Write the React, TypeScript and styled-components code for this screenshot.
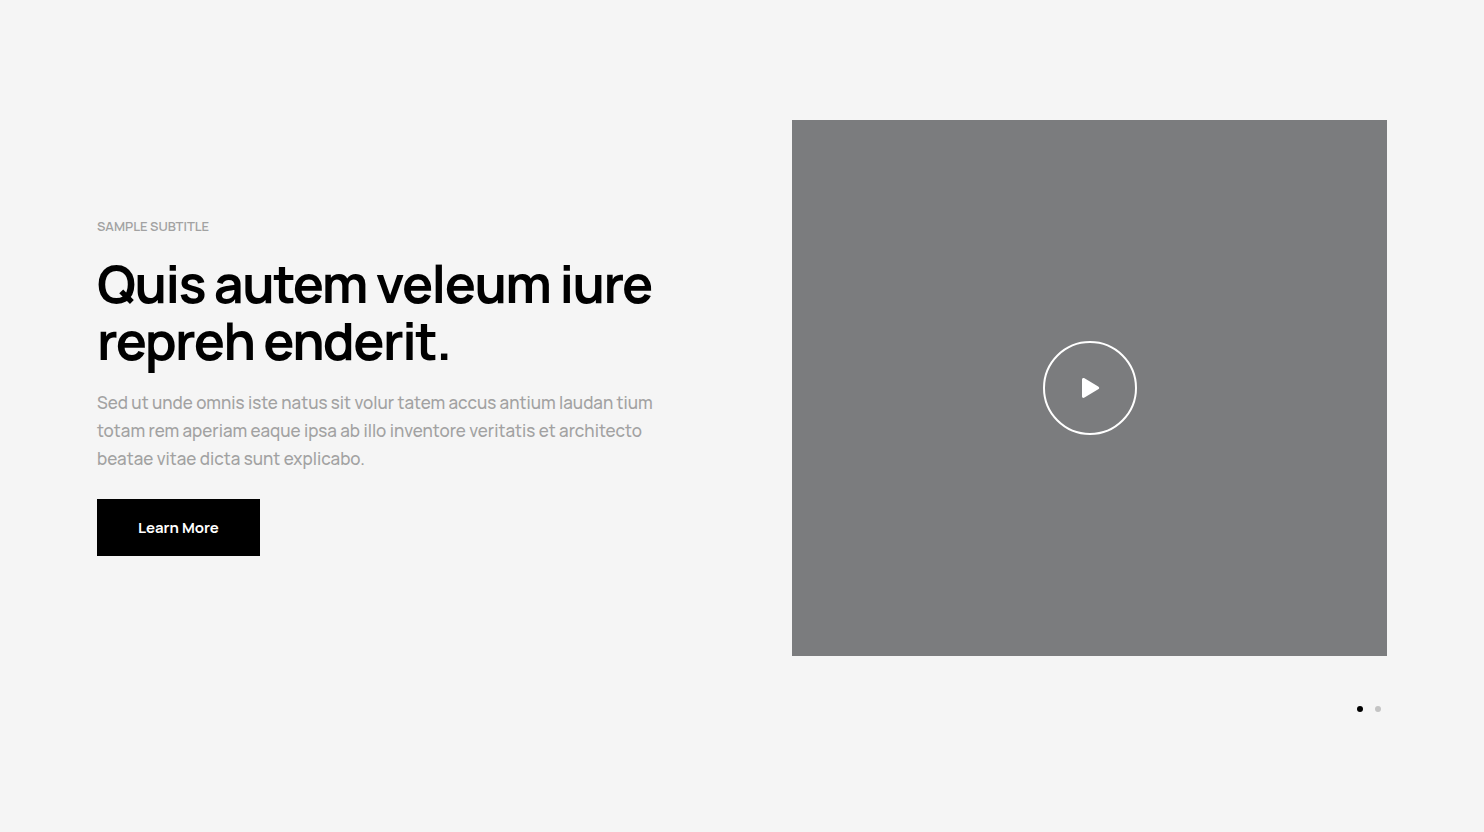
import React, { useState } from "react";
import styled, { createGlobalStyle } from "styled-components";

const GlobalStyle = createGlobalStyle`
  *, *::before, *::after { box-sizing: border-box; }
  body {
    margin: 0;
    background: #f5f5f5;
    font-family: Manrope, Inter, "Liberation Sans", sans-serif;
  }
`;

const Section = styled.main`
  max-width: 1484px;
  margin: 0 auto;
  padding: 120px 97px;
`;

const Slide = styled.section`
  display: grid;
  grid-template-columns: 1fr 1fr;
  gap: 100px;
  align-items: center;

  @media (max-width: 900px) {
    grid-template-columns: 1fr;
    gap: 48px;
  }
`;

const Copy = styled.div`
  display: flex;
  flex-direction: column;
  align-items: flex-start;
`;

const Subtitle = styled.p`
  margin: 0 0 22px;
  font-size: 13px;
  line-height: 13px;
  font-weight: 600;
  text-transform: uppercase;
  color: #a2a2a2;
`;

const Title = styled.h2`
  margin: 0 0 20px;
  font-size: 52px;
  line-height: 57px;
  font-weight: 700;
  letter-spacing: -0.03em;
  color: #000;
`;

const Description = styled.p`
  margin: 0 0 26px;
  font-size: 17px;
  line-height: 28px;
  font-weight: 500;
  color: #a2a2a2;
`;

const MoreLink = styled.a`
  display: block;
  padding: 18px 41px;
  background: #000;
  color: #fff;
  font-size: 15px;
  line-height: 21px;
  font-weight: 700;
  text-decoration: none;
`;

const Video = styled.div`
  display: flex;
  align-items: center;
  justify-content: center;
  aspect-ratio: 595 / 536;
  background: #7b7c7e;
`;

const PlayButton = styled.button`
  display: flex;
  align-items: center;
  justify-content: center;
  width: 94px;
  height: 94px;
  padding: 0;
  border: 2px solid #fff;
  border-radius: 50%;
  background: transparent;
  color: #fff;
  cursor: pointer;
`;

const Pagination = styled.nav`
  display: flex;
  justify-content: flex-end;
  margin-top: 44px;
`;

const Dot = styled.button<{ $active: boolean }>`
  display: flex;
  padding: 6px;
  border: 0;
  background: transparent;
  cursor: pointer;

  &::before {
    content: "";
    width: 6px;
    height: 6px;
    border-radius: 50%;
    background: ${(p) => (p.$active ? "#000" : "#c4c4c4")};
  }
`;

export default function App() {
  const [current, setCurrent] = useState(0);
  return (
    <>
      <GlobalStyle />
      <Section>
        <Slide>
          <Copy>
            <Subtitle>Sample subtitle</Subtitle>
            <Title>Quis autem veleum iure repreh enderit.</Title>
            <Description>
              Sed ut unde omnis iste natus sit volur tatem accus antium laudan tium
              totam rem aperiam eaque ipsa ab illo inventore veritatis et architecto
              beatae vitae dicta sunt explicabo.
            </Description>
            <MoreLink href="#more">Learn More</MoreLink>
          </Copy>
          <Video>
            <PlayButton type="button" aria-label="Play video">
              <svg width="20" height="22" viewBox="0 0 20 22" fill="currentColor" aria-hidden="true">
                <path d="M2 2.6C2 1.1 3.2.5 4.5 1.2L18.2 9.4C19.6 10.3 19.6 11.4 18.2 12.3L4.5 20.6C3.2 21.4 2 20.8 2 19.3Z" />
              </svg>
            </PlayButton>
          </Video>
        </Slide>
        <Pagination aria-label="Slides">
          {[0, 1].map((i) => (
            <Dot
              key={i}
              type="button"
              $active={i === current}
              aria-label={`Slide ${i + 1}`}
              onClick={() => setCurrent(i)}
            />
          ))}
        </Pagination>
      </Section>
    </>
  );
}
